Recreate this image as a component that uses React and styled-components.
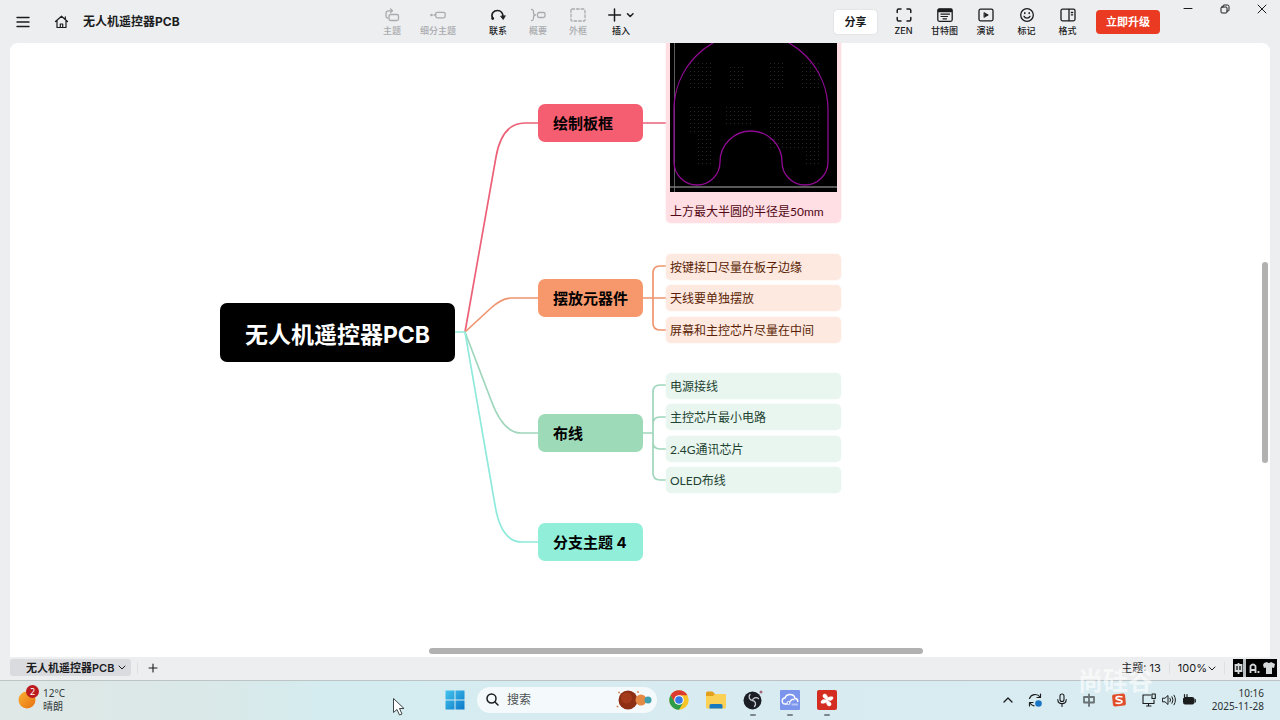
import styled, { createGlobalStyle } from "styled-components";

const GlobalStyle = createGlobalStyle`
  * {
    box-sizing: border-box;
  }

  body {
    margin: 0;
    font-family: Inter, "Noto Sans CJK SC", sans-serif;
    color: #1b1c1e;
  }

  button {
    font-family: inherit;
    color: inherit;
    border: none;
    background: none;
    padding: 0;
  }

  svg {
    display: block;
    flex: none;
  }
`;

const Page = styled.div`
  height: 100vh;
  display: flex;
  flex-direction: column;
  background-color: #edeef0;
  position: relative;
  overflow: hidden;
`;

/* ---------- top bar ---------- */

const TopBar = styled.header`
  height: 43px;
  flex: none;
  display: grid;
  grid-template-columns: 17fr auto 30fr;
  padding-left: 16px;
`;

const Brand = styled.div`
  display: flex;
  align-items: center;
  gap: 24px;
`;

const HomeGroup = styled.div`
  display: flex;
  align-items: center;
  gap: 14px;
`;

const DocTitle = styled.h1`
  margin: 0;
  font-size: 12px;
  line-height: 18px;
  font-weight: 700;
  white-space: nowrap;
`;

const IconButton = styled.button`
  display: flex;
  align-items: center;
  justify-content: center;
`;

const Tools = styled.nav`
  display: flex;
  align-items: center;
  gap: ${({ $gap }) => $gap}px;
  padding-top: 3px;
`;

const ToolGroups = styled.div`
  display: flex;
  gap: 32px;
`;

const Tool = styled.button`
  min-width: ${({ $width }) => $width || 20}px;
  display: flex;
  flex-direction: column;
  align-items: center;
  gap: 2px;
  font-size: 9px;
  line-height: 14px;
  font-weight: 500;
  white-space: nowrap;
  color: ${({ disabled }) => (disabled ? "#a9abae" : "#1b1c1e")};
`;

const Actions = styled.div`
  display: flex;
  justify-content: flex-end;
  align-items: center;
`;

const ShareButton = styled.button`
  width: 43px;
  height: 24px;
  margin-right: 6px;
  padding-bottom: 2px;
  border-radius: 4px;
  background-color: white;
  font-size: 11px;
  font-weight: 700;
  box-shadow: rgba(0, 0, 0, 0.12) 0px 0px 2px;
`;

const UpgradeButton = styled.button`
  width: 64px;
  height: 24px;
  margin: 0 9px 0 8px;
  padding-bottom: 2px;
  border-radius: 4px;
  background-color: #eb3a22;
  color: white;
  font-size: 11px;
  font-weight: 700;
`;

const WindowControls = styled.div`
  display: flex;
  align-self: flex-start;
`;

const WindowButton = styled.button`
  width: 37px;
  height: 18px;
  display: flex;
  align-items: center;
  justify-content: center;
`;

/* ---------- mind map ---------- */

const Canvas = styled.main`
  flex: 1;
  min-height: 0;
  margin: 0 10px;
  position: relative;
  overflow: hidden;
  background-color: white;
  border-radius: 8px 8px 0 0;
`;

const Links = styled.svg`
  position: absolute;
  top: 0;
  left: 0;
  overflow: visible;
  fill: none;
  stroke-width: 1.7;
`;

const Node = styled.div`
  position: absolute;
  left: ${({ $x }) => $x}px;
  top: ${({ $y }) => $y}px;
  display: flex;
  align-items: center;
  white-space: nowrap;
`;

const RootNode = styled(Node)`
  width: 235px;
  height: 59px;
  justify-content: center;
  border-radius: 7px;
  background-color: black;
  color: white;
  font-size: 23px;
  font-weight: 700;
`;

const BranchNode = styled(Node)`
  width: 105px;
  height: 38px;
  padding: 0 0 2px 15px;
  border-radius: 7px;
  background-color: ${({ $color }) => $color};
  color: black;
  font-size: 15px;
  font-weight: 700;
`;

const LeafNode = styled(Node)`
  width: 175px;
  height: 26px;
  padding: 0 0 2px 4px;
  border-radius: 5px;
  background-color: ${({ $bg }) => $bg};
  box-shadow: 0 0 2px ${({ $bg }) => $bg};
  color: ${({ $ink }) => $ink};
  font-family: Lato, "Noto Sans CJK SC", sans-serif;
  font-size: 12px;
`;

const PictureNode = styled(LeafNode)`
  height: auto;
  padding: 4px 4px 2px;
  flex-direction: column;
  align-items: flex-start;
  gap: 11px;
  line-height: 18px;
`;

const ScrollThumb = styled.div`
  position: absolute;
  border-radius: 3px;
  background-color: #b1b1b1;
`;

const VerticalThumb = styled(ScrollThumb)`
  right: 2px;
  top: 219px;
  width: 6px;
  height: 201px;
`;

const HorizontalThumb = styled(ScrollThumb)`
  left: 419px;
  bottom: 3px;
  width: 494px;
  height: 6px;
`;

/* ---------- sheet bar ---------- */

const SheetBar = styled.div`
  height: 24px;
  flex: none;
  display: flex;
  align-items: center;
  justify-content: space-between;
  padding: 0 3px 2px 10px;
  border-bottom: 1px solid #bcc4c6;
  font-size: 11px;
`;

const SheetGroup = styled.div`
  display: flex;
  align-items: center;
  gap: ${({ $gap }) => $gap}px;
`;

const SheetTab = styled.button`
  height: 17px;
  padding: 0 5px 2px 16px;
  display: flex;
  align-items: center;
  gap: 4px;
  border-radius: 3px;
  background-color: #dadbde;
  font-size: 11px;
  font-weight: 600;
  white-space: nowrap;
`;

const TopicCount = styled.span`
  padding-bottom: 2px;
`;

const Separator = styled.span`
  width: 1px;
  height: 12px;
  background-color: #dfe0e2;
`;

const ZoomButton = styled.button`
  display: flex;
  align-items: center;
  gap: 1px;
  font-size: 11px;
`;

/* ---------- taskbar ---------- */

const Taskbar = styled.footer`
  height: 39px;
  flex: none;
  display: grid;
  grid-template-columns: 1fr auto 1fr;
  align-items: center;
  padding: 0 16px 2px 18px;
  background: linear-gradient(90deg, #dfe8e6 0%, #dae8e8 16%, #d4ecf0 26%, #d8ebf1 60%, #d9ecf1 100%);
  font-family: "Noto Sans", "Noto Sans CJK SC", sans-serif;
`;

const Weather = styled.div`
  display: flex;
  align-items: center;
  gap: 5px;
  font-size: 10px;
  line-height: 13px;
  color: #333b3d;
`;

const WeatherIcon = styled.div`
  position: relative;
`;

const Badge = styled.span`
  position: absolute;
  top: -4px;
  right: -1px;
  width: 13px;
  height: 13px;
  border-radius: 50%;
  background-color: #bb1a1f;
  color: white;
  font-size: 9px;
  line-height: 13px;
  text-align: center;
`;

const Dock = styled.div`
  display: flex;
  align-items: center;
  gap: 12px;
`;

const SearchBox = styled.label`
  width: 180px;
  height: 26px;
  display: flex;
  align-items: center;
  gap: 8px;
  padding: 0 3px 0 9px;
  border-radius: 13px;
  background-color: #f4fafc;
`;

const SearchInput = styled.input`
  flex: 1;
  min-width: 0;
  padding: 0;
  border: none;
  outline: none;
  background: none;
  font-family: inherit;
  font-size: 12px;

  &::placeholder {
    color: #4d5355;
  }
`;

const Apps = styled.div`
  display: flex;
  gap: 17px;
`;

const AppButton = styled.button`
  position: relative;
  width: 20px;
  height: 20px;

  &::after {
    content: "";
    display: ${({ $running }) => ($running ? "block" : "none")};
    position: absolute;
    left: 7px;
    bottom: -6px;
    width: 6px;
    height: 2px;
    border-radius: 1px;
    background-color: #7b868a;
  }
`;

const Tray = styled.div`
  display: flex;
  align-items: center;
  justify-content: flex-end;
  gap: 16px;
`;

const TrayGroup = styled.div`
  display: flex;
  align-items: center;
  gap: ${({ $gap }) => $gap}px;
`;

const Clock = styled.div`
  font-size: 10px;
  line-height: 13px;
  text-align: right;
  white-space: nowrap;
  color: #2b3133;
`;

const Watermark = styled.div`
  position: absolute;
  right: 127px;
  bottom: 22px;
  font-size: 25px;
  line-height: 34px;
  font-weight: 700;
  color: rgba(255, 255, 255, 0.6);
  pointer-events: none;
`;

const Pointer = styled.svg`
  position: absolute;
  left: 392px;
  bottom: 3px;
`;

/* ---------- icons ---------- */

const Icon = ({ w = 16, h = 14, sw = 1.3, children }) => (
  <svg width={w} height={h} viewBox={`0 0 ${w} ${h}`} fill="none" stroke="currentColor" strokeWidth={sw} strokeLinecap="round" strokeLinejoin="round">
    {children}
  </svg>
);

const TopicIcon = () => (
  <Icon sw={1.3}>
    <rect x="5" y="6.5" width="9.500" height="6" rx="1.5" />
    <path d="M3.500 10C2.400 9.700 2 9 2 8V5.500C2 3.600 3 2.800 4.500 2.800H8M6.500 1L8.500 2.800L6.500 4.600" />
  </Icon>
);

const SubtopicIcon = () => (
  <Icon sw={1.3}>
    <circle cx="1.500" cy="7" r="1.300" fill="currentColor" stroke="none" />
    <path d="M4 7H5.500" />
    <rect x="5.700" y="4.300" width="9.500" height="5.500" rx="1.500" />
  </Icon>
);

const RelationIcon = () => (
  <Icon sw={1.6}>
    <path d="M2.500 10C0.500 5.500 4 2.500 7.500 2.500C10.800 2.500 13.200 5 13 9" />
    <path d="M10.800 8.500L13.200 11.500L15.200 8Z" fill="currentColor" strokeWidth="0.800" />
    <circle cx="2.700" cy="10.500" r="1.400" fill="currentColor" stroke="none" />
  </Icon>
);

const SummaryIcon = () => (
  <Icon sw={1.3}>
    <path d="M1.500 1.500C3.500 1.500 3.500 2.500 3.500 4.500C3.500 6 4 7 5.500 7C4 7 3.500 8 3.500 9.500C3.500 11.500 3.500 12.500 1.500 12.500" />
    <rect x="7.500" y="4.500" width="7.500" height="5" rx="1.500" />
  </Icon>
);

const BoundaryIcon = () => (
  <Icon sw={1.3}>
    <rect x="1" y="1" width="14" height="12" rx="1" strokeDasharray="2.600 2" />
  </Icon>
);

const InsertIcon = () => (
  <Icon w={26} sw={1.5}>
    <path d="M6.500 1V13M0.800 7H12.500" />
    <path d="M19.500 5.700L22.200 8.500L25 5.700" />
  </Icon>
);

const ZenIcon = () => (
  <Icon sw={1.5}>
    <path d="M1.200 4.500V2.500Q1.200 1 2.700 1H5M11 1H13.300Q14.800 1 14.800 2.500V4.500M14.800 9.500V11.500Q14.800 13 13.300 13H11M5 13H2.700Q1.200 13 1.200 11.500V9.500" />
  </Icon>
);

const GanttIcon = () => (
  <Icon>
    <rect x="0.800" y="1" width="14.400" height="12.300" rx="1.500" />
    <path d="M1.500 1.500H14.500V3.500H1.500Z" fill="currentColor" />
    <path d="M4 6.200H12.500M4 8.500H10.500M6 10.800H9.500" strokeWidth="1.200" />
  </Icon>
);

const PitchIcon = () => (
  <Icon>
    <rect x="1" y="1.200" width="14" height="11.600" rx="1.500" />
    <path d="M6.300 4.700L10.300 7L6.300 9.300Z" fill="currentColor" strokeWidth="0.8" />
  </Icon>
);

const MarkerIcon = () => (
  <Icon>
    <circle cx="8" cy="7" r="6.300" />
    <path d="M5 8.300C6 10.800 10 10.800 11 8.300" />
    <path d="M5.800 4.800V5.400M10.200 4.800V5.400" strokeWidth="1.500" />
  </Icon>
);

const FormatIcon = () => (
  <Icon>
    <rect x="1" y="1.200" width="14" height="11.600" rx="1.500" />
    <path d="M9 1.500V12.500M11.300 4.500H12.700M11.300 6.800H12.700" />
  </Icon>
);

const ChevronIcon = () => (
  <Icon w={8} h={8} sw={1}>
    <path d="M1 3L4 6L7 3" />
  </Icon>
);

/* ---------- data ---------- */

const branches = [
  { label: "绘制板框", y: 61, color: "#f55d70" },
  { label: "摆放元器件", y: 236, color: "#f7986c" },
  { label: "布线", y: 371, color: "#9ddab8" },
  { label: "分支主题 4", y: 480, color: "#91efd9" },
];

const leaves = [
  { label: "按键接口尽量在板子边缘", y: 211, bg: "#fde9e0", ink: "#5b1f06" },
  { label: "天线要单独摆放", y: 242, bg: "#fde9e0", ink: "#5b1f06" },
  { label: "屏幕和主控芯片尽量在中间", y: 274, bg: "#fde9e0", ink: "#5b1f06" },
  { label: "电源接线", y: 330, bg: "#e9f6f0", ink: "#1e4331" },
  { label: "主控芯片最小电路", y: 361, bg: "#e9f6f0", ink: "#1e4331" },
  { label: "2.4G通讯芯片", y: 393, bg: "#e9f6f0", ink: "#1e4331" },
  { label: "OLED布线", y: 424, bg: "#e9f6f0", ink: "#1e4331" },
];

const editTools = [
  { label: "主题", icon: <TopicIcon /> },
  { label: "细分主题", icon: <SubtopicIcon /> },
];

const insertTools = [
  { label: "联系", icon: <RelationIcon /> },
  { label: "概要", icon: <SummaryIcon />, disabled: true },
  { label: "外框", icon: <BoundaryIcon />, disabled: true },
  { label: "插入", icon: <InsertIcon /> },
];

const viewTools = [
  { label: "ZEN", icon: <ZenIcon /> },
  { label: "甘特图", icon: <GanttIcon /> },
  { label: "演说", icon: <PitchIcon /> },
  { label: "标记", icon: <MarkerIcon /> },
  { label: "格式", icon: <FormatIcon /> },
];

function BoardOutline() {
  return (
    <svg width="167" height="163" viewBox="0 -14 167 163" fill="none">
      <defs>
        <pattern id="grid" width="4" height="4" patternUnits="userSpaceOnUse">
          <rect width="1" height="1" fill="#262626" />
        </pattern>
      </defs>
      <rect y="-14" width="167" height="163" fill="#000" />
      <path d="M18 20H44V46H18ZM58 24H76V46H58ZM98 18H116V46H98ZM132 20H152V46H132ZM18 62H44V122H26V90H18ZM56 62H82V84H56ZM98 62H152V122H134V108H98Z" fill="url(#grid)" />
      <path d="M4.500 -14V149" stroke="#5c5c5c" />
      <path d="M0 144H167" stroke="#777" strokeWidth="1.500" />
      <path d="M4 67A77 77 0 0 1 158 67V119A23 23 0 0 1 112 119A31 31 0 0 0 50 119A23 23 0 0 1 4 119Z" stroke="#8f0a93" strokeWidth="1.300" />
    </svg>
  );
}

function MindMap() {
  return (
    <Canvas>
      <Links width="840" height="600">
        <g stroke="#ec6177">
          <path d="M455 289L486 114Q492 80 515 80H528" />
          <path d="M633 80H656" />
        </g>
        <g stroke="#f0946f">
          <path d="M455 289L481 265Q492 255 501 255H528" />
          <path d="M633 255H656M656 223H650Q643 223 643 230V280Q643 287 650 287H656" />
        </g>
        <g stroke="#9fd6bc">
          <path d="M455 289L481 357Q493 390 511 390H528" />
          <path d="M633 390H643M656 342H650Q643 342 643 349V430Q643 437 650 437H656M643 381Q643 374 650 374H656M643 399Q643 406 650 406H656" />
        </g>
        <path d="M445 289H455L485 462Q491 499 512 499H528" stroke="#8feadb" />
      </Links>

      <RootNode $x={210} $y={260}>无人机遥控器PCB</RootNode>

      {branches.map((branch) => (
        <BranchNode key={branch.label} $x={528} $y={branch.y} $color={branch.color}>
          {branch.label}
        </BranchNode>
      ))}

      <PictureNode $x={656} $y={-18} $bg="#ffdee4" $ink="#520814">
        <BoardOutline />
        上方最大半圆的半径是50mm
      </PictureNode>

      {leaves.map((leaf) => (
        <LeafNode key={leaf.label} $x={656} $y={leaf.y} $bg={leaf.bg} $ink={leaf.ink}>
          {leaf.label}
        </LeafNode>
      ))}

      <VerticalThumb />
      <HorizontalThumb />
    </Canvas>
  );
}

function Header() {
  return (
    <TopBar>
      <Brand>
        <IconButton aria-label="菜单">
          <Icon w={14} h={12} sw={1.4}>
            <path d="M1 1.500H13M1 6H13M1 10.500H13" />
          </Icon>
        </IconButton>
        <HomeGroup>
          <IconButton aria-label="主页">
            <Icon w={15} h={14} sw={1.200}>
              <path d="M1.500 6.500L7.500 1.200L13.500 6.500M3 5.500V12.500H12V5.500M6.300 12.500V9H8.700V12.500M11.300 1.800V4" />
            </Icon>
          </IconButton>
          <DocTitle>无人机遥控器PCB</DocTitle>
        </HomeGroup>
      </Brand>

      <ToolGroups>
        <Tools $gap={18}>
          {editTools.map((tool) => (
            <Tool key={tool.label} disabled>
              {tool.icon}
              {tool.label}
            </Tool>
          ))}
        </Tools>
        <Tools $gap={20}>
          {insertTools.map((tool) => (
            <Tool key={tool.label} disabled={tool.disabled}>
              {tool.icon}
              {tool.label}
            </Tool>
          ))}
        </Tools>
      </ToolGroups>

      <Actions>
        <ShareButton>分享</ShareButton>
        <Tools $gap={0}>
          {viewTools.map((tool) => (
            <Tool key={tool.label} $width={41}>
              {tool.icon}
              {tool.label}
            </Tool>
          ))}
        </Tools>
        <UpgradeButton>立即升级</UpgradeButton>
        <WindowControls>
          <WindowButton aria-label="最小化">
            <Icon w={10} h={10} sw={1}><path d="M1 4.500H9" /></Icon>
          </WindowButton>
          <WindowButton aria-label="还原">
            <Icon w={10} h={10} sw={1}>
              <rect x="1" y="3" width="6" height="6" rx="1" />
              <path d="M3 3V2Q3 1 4 1H7.500Q9 1 9 2.500V6Q9 7 8 7H7" />
            </Icon>
          </WindowButton>
          <WindowButton aria-label="关闭">
            <Icon w={10} h={10} sw={1}><path d="M1 1L9 9M9 1L1 9" /></Icon>
          </WindowButton>
        </WindowControls>
      </Actions>
    </TopBar>
  );
}

function Sheets() {
  return (
    <SheetBar>
      <SheetGroup $gap={6}>
        <SheetTab>
          无人机遥控器PCB
          <ChevronIcon />
        </SheetTab>
        <Separator />
        <IconButton aria-label="新建画布">
          <Icon w={18} h={10} sw={1.100}><path d="M9 1V9M5 5H13" /></Icon>
        </IconButton>
      </SheetGroup>
      <SheetGroup $gap={8}>
        <TopicCount>主题: 13</TopicCount>
        <Separator />
        <ZoomButton>
          100%
          <ChevronIcon />
        </ZoomButton>
        <Separator />
        <svg width="44" height="18" viewBox="0 0 44 18">
          <rect width="44" height="18" fill="#000" />
          <path d="M2.500 6H8.500V12H2.500ZM5.500 4V15M17.500 14V7Q20 4 22.500 7V14M17.500 11H22.500M25.500 12V14" stroke="#d6d9da" strokeWidth="1.800" fill="none" />
          <path d="M10 0H13V18H10Z" fill="#b9bec0" />
          <path d="M31 4L34 3Q36 5 38 3L42 5L41 9L39 8.500V15H33V8.500L31 9L30 6Z" fill="#d6d9da" />
        </svg>
      </SheetGroup>
    </SheetBar>
  );
}

function Desktop() {
  return (
    <Taskbar>
      <Weather>
        <WeatherIcon>
          <svg width="20" height="22" viewBox="0 0 20 22">
            <defs>
              <linearGradient id="sun" x1="0" y1="0" x2="1" y2="1">
                <stop offset="0" stopColor="#f9b233" />
                <stop offset="1" stopColor="#e8700f" />
              </linearGradient>
            </defs>
            <circle cx="9" cy="11" r="8.500" fill="url(#sun)" />
          </svg>
          <Badge>2</Badge>
        </WeatherIcon>
        <div>
          <div>12°C</div>
          <div>晴朗</div>
        </div>
      </Weather>

      <Dock>
        <AppButton aria-label="开始">
          <svg width="20" height="20" viewBox="0 0 20 20">
            <defs>
              <linearGradient id="win" x1="0" y1="0" x2="1" y2="1">
                <stop offset="0" stopColor="#45c4ee" />
                <stop offset="1" stopColor="#0b78c8" />
              </linearGradient>
            </defs>
            <path d="M0.500 0.500H9.500V9.500H0.500ZM10.500 0.500H19.500V9.500H10.500ZM0.500 10.500H9.500V19.500H0.500ZM10.500 10.500H19.500V19.500H10.500Z" fill="url(#win)" />
          </svg>
        </AppButton>
        <SearchBox>
          <Icon w={13} h={13} sw={1.500}>
            <circle cx="5.500" cy="5.500" r="4.500" />
            <path d="M9 9L12 12" />
          </Icon>
          <SearchInput type="text" placeholder="搜索" aria-label="搜索" />
          <svg width="38" height="20" viewBox="0 0 38 20">
            <circle cx="12" cy="10" r="9.500" fill="#8e2f14" />
            <circle cx="10.500" cy="8" r="5.500" fill="#a23a1b" />
            <circle cx="25" cy="10" r="5.500" fill="#e58a45" />
            <circle cx="32" cy="10" r="3.500" fill="#3f9fae" />
            <circle cx="1.500" cy="16.500" r="1" fill="#d98a5a" />
            <circle cx="22" cy="2" r="1" fill="#d98a5a" />
            <circle cx="3" cy="2.500" r="1" fill="#d98a5a" />
          </svg>
        </SearchBox>
        <Apps>
          <AppButton aria-label="Chrome">
            <svg width="20" height="20" viewBox="0 0 20 20">
              <circle cx="10" cy="10" r="9.700" fill="#f7c52a" />
              <path d="M1.600 5.150A9.700 9.700 0 0 1 18.400 5.150H10L5.800 12.430Z" fill="#dc3b30" />
              <path d="M1.600 5.150L5.800 12.430Q8 15.500 14.200 12.430L10 19.700A9.700 9.700 0 0 1 1.600 5.150Z" fill="#2c9c4b" />
              <circle cx="10" cy="10" r="4.800" fill="#fff" />
              <circle cx="10" cy="10" r="3.800" fill="#3478e6" />
            </svg>
          </AppButton>
          <AppButton aria-label="文件资源管理器">
            <svg width="20" height="20" viewBox="0 0 20 20">
              <path d="M0 3Q0 1.500 1.500 1.500H6.500L9 4H18.500Q20 4 20 5.500V10H0Z" fill="#e2a01c" />
              <path d="M0 6H7L9 4H18.500Q20 4 20 5.500V17Q20 18.500 18.500 18.500H1.500Q0 18.500 0 17Z" fill="#fbd155" />
              <path d="M3.500 18.500V15.500Q3.500 14 5 14H15Q16.500 14 16.500 15.500V18.500Z" fill="#1979be" />
            </svg>
          </AppButton>
          <AppButton aria-label="OBS" $running>
            <svg width="20" height="20" viewBox="0 0 20 20" fill="none">
              <circle cx="9.500" cy="10.500" r="9" fill="#1c1e25" />
              <path d="M7 4.500C5 7 6.500 10 9.500 10.500M15.500 8.500C13 6.500 9.800 8 9.500 10.500M11.500 16.500C13.500 14 12.500 11 9.500 10.500" stroke="#c9ccd3" strokeWidth="1.300" strokeLinecap="round" />
              <circle cx="18" cy="2" r="1.500" fill="#a5687e" />
            </svg>
          </AppButton>
          <AppButton aria-label="立创EDA" $running>
            <svg width="20" height="20" viewBox="0 0 20 20" fill="none">
              <rect width="20" height="20" rx="1" fill="#7c95ec" />
              <path d="M7 14H5.500C3 14 2.200 12.500 2.200 11C2.200 9 3.800 8 5 8C5.700 5.500 7.500 4.500 10 4.500C12.800 4.500 14.500 6 15 8.300C17 8.700 18 10 17.800 12" stroke="#fff" strokeWidth="1.400" />
              <path d="M9.500 12L12 9.500H14.500" stroke="#fff" strokeWidth="1.300" />
              <circle cx="8.500" cy="13" r="1.500" stroke="#fff" />
              <path d="M11.500 14.500H18" stroke="#b4c2f5" strokeWidth="2" />
            </svg>
          </AppButton>
          <AppButton aria-label="Xmind" $running>
            <svg width="20" height="20" viewBox="0 0 20 20" fill="none">
              <rect width="20" height="20" rx="2" fill="#d42c20" />
              <path d="M10 10L6.500 7.500Q5 5.500 7 4Q9.500 3.500 10.500 6.500ZM10 10L10.500 7.800Q13 6 16 7Q16.500 9.500 13.500 10.500ZM10 10L13.500 12.500Q15 14.500 13 16Q10.500 16.500 9.500 13.500ZM10 10L9.500 12.200Q7 14 4 13Q3.500 10.500 6.500 9.500Z" fill="#fff" stroke="#fff" strokeWidth="0.500" strokeLinejoin="round" />
            </svg>
          </AppButton>
        </Apps>
      </Dock>

      <Tray>
        <TrayGroup $gap={13}>
          <Icon w={14} h={14} sw={1.300}><path d="M3 9L7 5L11 9" /></Icon>
          <Icon w={14} h={14} sw={1.200}>
            <path d="M1.500 5.500A6 6 0 0 1 12 4M12.500 1V4.500H9M1.500 13V9.500H5M2 10A6 6 0 0 0 6 12.800" />
            <circle cx="10.500" cy="10.500" r="3.300" fill="#1a76c4" stroke="none" />
          </Icon>
          <Icon w={14} h={14} sw={1.100}>
            <rect x="5" y="1" width="4" height="7.500" rx="2" />
            <path d="M2.800 6.500C2.800 12 11.200 12 11.200 6.500M7 10.700V13.500" />
          </Icon>
          <Icon w={14} h={14} sw={1}>
            <path d="M2 4H12V9.500H2ZM7 1.500V13" stroke="#687276" strokeWidth="1.800" />
          </Icon>
        </TrayGroup>
        <svg width="14" height="14" viewBox="0 0 14 14" fill="none">
          <rect x="0.500" y="1" width="13" height="12" rx="2" fill="#e04f2c" transform="rotate(-6 7 7)" />
          <path d="M10.500 4C7 3 4 3.500 4 5.300C4 7.300 10 6.500 10 8.700C10 10.500 6.500 10.800 3.500 9.800" stroke="#fff" strokeWidth="1.600" />
        </svg>
        <TrayGroup $gap={6}>
          <Icon w={14} h={14} sw={1.100}>
            <path d="M8.500 2H1V10.500H12V7M4.500 13H9M6.500 10.500V13" />
            <rect x="10" y="1" width="3.300" height="4.500" />
          </Icon>
          <Icon w={14} h={14} sw={1}>
            <path d="M0.800 5.200H3L6 2.500V11.500L3 8.800H0.800ZM8 5.200Q9.300 7 8 8.800M10 3.700Q12.200 7 10 10.300M12 2.200Q15 7 12 11.800" />
          </Icon>
          <Icon w={14} h={14} sw={1}>
            <rect x="1.500" y="4.500" width="10.500" height="6.500" rx="1.500" fill="currentColor" />
            <path d="M13.300 6.500V9M2.500 1.500V4M5 1.500V4" strokeWidth="1.200" />
          </Icon>
        </TrayGroup>
        <Clock>
          <div>10:16</div>
          <div>2025-11-28</div>
        </Clock>
      </Tray>
    </Taskbar>
  );
}

export default function App() {
  return (
    <Page>
      <GlobalStyle />
      <Header />
      <MindMap />
      <Sheets />
      <Desktop />
      <Watermark>尚硅谷</Watermark>
      <Pointer width="14" height="20" viewBox="0 0 14 20">
        <path d="M1.500 1.500V15.500L5 12.500L7.500 18L10 17L7.500 11.500H12Z" fill="#fff" stroke="#3c4648" strokeWidth="1" />
      </Pointer>
    </Page>
  );
}
